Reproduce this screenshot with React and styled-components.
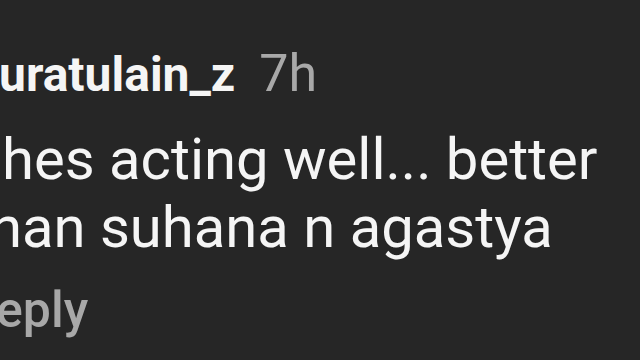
import React from "react";
import styled, { createGlobalStyle } from "styled-components";

const GlobalStyle = createGlobalStyle`
  html, body {
    margin: 0;
    padding: 0;
    background: #262626;
  }
  body {
    font-family: Roboto, "Liberation Sans", sans-serif;
    -webkit-font-smoothing: antialiased;
  }
`;

const Screen = styled.div`
  width: 640px;
  height: 360px;
  overflow: hidden;
  background: #262626;
  color: #f5f5f5;
  padding-top: 46px;
  box-sizing: border-box;
`;

const Header = styled.div`
  font-size: 52px;
  line-height: 56px;
  white-space: nowrap;
  margin-left: ${(p) => p.$shift || 0}px;
`;

const Username = styled.span`
  font-size: 48px;
  font-weight: 700;
  color: #f5f5f5;
  margin-right: 24px;
`;

const Time = styled.span`
  font-size: 52px;
  font-weight: 400;
  color: #a8a8a8;
`;

const Body = styled.div`
  margin-top: 22px;
  font-size: 58px;
  line-height: 68px;
`;

const Line = styled.div`
  white-space: nowrap;
  margin-left: ${(p) => p.$shift || 0}px;
`;

const Reply = styled.div`
  margin-top: 21px;
  margin-left: ${(p) => p.$shift || 0}px;
  font-size: 50px;
  font-weight: 500;
  line-height: 56px;
  color: #a8a8a8;
`;

export default function App() {
  return (
    <>
      <GlobalStyle />
      <Screen>
        <Header $shift={-1}>
          <Username>uratulain_z</Username>
          <Time>7h</Time>
        </Header>
        <Body>
          <Line $shift={2}>hes acting well... better</Line>
          <Line $shift={-10}>han suhana n agastya</Line>
        </Body>
        <Reply $shift={-4}>eply</Reply>
      </Screen>
    </>
  );
}
